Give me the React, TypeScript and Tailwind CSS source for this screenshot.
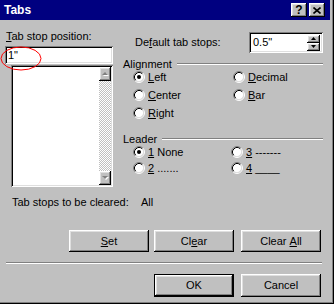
import React from "react";

const raised =
  "shadow-[inset_-1px_-1px_#000000,inset_1px_1px_#ffffff,inset_-2px_-2px_#808080,inset_2px_2px_#dfdfdf]";
const sunken =
  "shadow-[inset_1px_1px_#808080,inset_-1px_-1px_#ffffff,inset_2px_2px_#000000,inset_-2px_-2px_#dfdfdf]";

function Radio({ checked }: { checked?: boolean }) {
  return (
    <svg width="12" height="12" viewBox="0 0 12 12" className="shrink-0">
      <circle cx="6" cy="6" r="4.5" fill="#ffffff" />
      <path d="M2.11 9.89A5.5 5.5 0 0 1 9.89 2.11" fill="none" stroke="#808080" />
      <path d="M9.89 2.11A5.5 5.5 0 0 1 2.11 9.89" fill="none" stroke="#ffffff" />
      <path d="M2.82 9.18A4.5 4.5 0 0 1 9.18 2.82" fill="none" stroke="#000000" />
      <path d="M9.18 2.82A4.5 4.5 0 0 1 2.82 9.18" fill="none" stroke="#dfdfdf" />
      {checked && <circle cx="6" cy="6" r="2" fill="#000000" />}
    </svg>
  );
}

function Option({ checked, children }: { checked?: boolean; children: React.ReactNode }) {
  return (
    <div className="flex items-center h-[14px]">
      <Radio checked={checked} />
      <span className="ml-[3px]">{children}</span>
    </div>
  );
}

function Button({ children, isDefault }: { children: React.ReactNode; isDefault?: boolean }) {
  return (
    <div
      className={`flex items-center justify-center w-[80px] h-full bg-[#c0c0c0] ${raised} ${
        isDefault ? "border border-black" : ""
      }`}
    >
      {children}
    </div>
  );
}

function GroupLabel({ children, gap }: { children: React.ReactNode; gap: string }) {
  return (
    <div className="flex items-center h-[12px]">
      <span>{children}</span>
      <div className={`flex-1 h-[2px] bg-white border-t border-t-[#808080] ${gap}`} />
    </div>
  );
}

function ScrollArrow({ up }: { up?: boolean }) {
  return (
    <div className={`flex items-center justify-center w-[12px] h-[14px] bg-[#c0c0c0] ${raised}`}>
      <svg width="7" height="5" viewBox="0 0 7 5">
        {up ? (
          <>
            <polygon points="4,1 7,4 1,4" fill="#ffffff" />
            <polygon points="3,0 6,3 0,3" fill="#808080" />
          </>
        ) : (
          <>
            <polygon points="1,1 7,1 4,4" fill="#ffffff" />
            <polygon points="0,0 6,0 3,3" fill="#808080" />
          </>
        )}
      </svg>
    </div>
  );
}

function SpinArrow({ up }: { up?: boolean }) {
  return (
    <div className={`flex items-center justify-center w-[13px] h-[8px] bg-[#c0c0c0] ${raised}`}>
      <svg width="5" height="3" viewBox="0 0 5 3">
        {up ? <polygon points="2.5,0 5,3 0,3" fill="#000" /> : <polygon points="0,0 5,0 2.5,3" fill="#000" />}
      </svg>
    </div>
  );
}

export default function App() {
  return (
    <div className="relative w-[334px] h-[304px] bg-[#c0c0c0] overflow-hidden font-['Liberation_Sans',Arial,sans-serif] text-[11px] leading-[13px] text-black shadow-[inset_-1px_-1px_#000000,inset_-2px_-2px_#808080]">
      {/* caption */}
      <div className="flex items-center w-[330px] h-[20px] bg-[#000080] pl-[4px] pr-[5px]">
        <span className="text-white font-bold text-[12px]">Tabs</span>
        <div className="ml-auto flex gap-[2px]">
          <div className={`flex items-center justify-center w-[16px] h-[14px] bg-[#c0c0c0] ${raised} font-bold text-[12px] leading-[12px]`}>
            ?
          </div>
          <div className={`flex items-center justify-center w-[16px] h-[14px] bg-[#c0c0c0] ${raised}`}>
            <svg width="8" height="7" viewBox="0 0 8 7">
              <path d="M0.5 0.5L7.5 6.5M7.5 0.5L0.5 6.5" stroke="#000" strokeWidth="1.6" />
            </svg>
          </div>
        </div>
      </div>

      <div className="flex">
        {/* left column */}
        <div className="ml-[5px] w-[108px] pt-[10px] flex flex-col">
          <div className="h-[13px] pl-[1px]">
            <span className="underline">T</span>ab stop position:
          </div>
          <div className={`mt-[3px] h-[18px] bg-white flex items-center pl-[3px] ${sunken}`}>1"</div>
          <div className={`mt-[1px] ml-[6px] w-[102px] h-[122px] bg-white p-[2px] flex ${sunken}`}>
            <div className="flex-1" />
            <div className="w-[12px] flex flex-col bg-[image:repeating-conic-gradient(#c0c0c0_0_25%,#ffffff_0_50%)] bg-[length:2px_2px]">
              <ScrollArrow up />
              <div className="flex-1" />
              <ScrollArrow />
            </div>
          </div>
        </div>

        {/* right column */}
        <div className="ml-[10px] w-[200px] flex flex-col">
          <div className="mt-[12px] h-[21px] flex items-center">
            <span className="ml-[12px]">
              De<span className="underline">f</span>ault tab stops:
            </span>
            <div className={`ml-auto w-[74px] h-[21px] bg-white flex items-center pl-[4px] pr-[3px] ${sunken}`}>
              <span>0.5"</span>
              <div className="ml-auto flex flex-col">
                <SpinArrow up />
                <SpinArrow />
              </div>
            </div>
          </div>

          <div className="mt-[5px]">
            <GroupLabel gap="ml-[5px]">Alignment</GroupLabel>
          </div>
          <div className="grid grid-cols-[100px_1fr] gap-y-[4px] pl-[10px]">
            <Option checked>
              <span className="underline">L</span>eft
            </Option>
            <Option>
              <span className="underline">D</span>ecimal
            </Option>
            <Option>
              <span className="underline">C</span>enter
            </Option>
            <Option>
              <span className="underline">B</span>ar
            </Option>
            <Option>
              <span className="underline">R</span>ight
            </Option>
          </div>

          <div className="mt-[13px]">
            <GroupLabel gap="ml-[5px]">Leader</GroupLabel>
          </div>
          <div className="grid grid-cols-[98px_1fr] gap-y-[2px] pl-[10px]">
            <Option checked>
              <span className="underline">1</span> None
            </Option>
            <Option>
              <span className="underline">3</span> -------
            </Option>
            <Option>
              <span className="underline">2</span> .......
            </Option>
            <Option>
              <span className="underline">4</span> ____
            </Option>
          </div>
        </div>
      </div>

      {/* cleared */}
      <div className="mt-[9px] h-[13px] flex pl-[12px]">
        <span className="w-[129px]">Tab stops to be cleared:</span>
        <span>All</span>
      </div>

      <div className="mt-[21px] h-[22px] flex">
        <div className="ml-[69px]">
          <Button>
            <span className="underline">S</span>et
          </Button>
        </div>
        <div className="ml-[5px]">
          <Button>
            Cl<span className="underline">e</span>ar
          </Button>
        </div>
        <div className="ml-[7px]">
          <Button>
            Clear <span className="underline ml-[3px]">A</span>ll
          </Button>
        </div>
      </div>

      <div className="mt-[10px] ml-[6px] w-[316px] h-[2px] bg-white border-t border-t-[#808080]" />

      <div className="mt-[10px] h-[23px] flex">
        <div className="ml-[154px]">
          <Button isDefault>OK</Button>
        </div>
        <div className="ml-[7px]">
          <Button>Cancel</Button>
        </div>
      </div>

      {/* red annotation around the tab stop value */}
      <svg className="absolute left-0 top-[46px]" width="44" height="26" viewBox="0 0 44 26">
        <ellipse cx="21" cy="12.5" rx="20" ry="11.5" fill="none" stroke="#ff0000" strokeWidth="1" />
      </svg>
    </div>
  );
}
